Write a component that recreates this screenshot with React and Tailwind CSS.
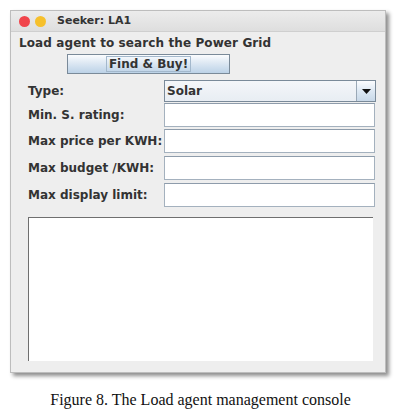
import React from "react";

const fields = [
    { label: "Min. S. rating:", mt: "mt-[1px]" },
    { label: "Max price per KWH:", mt: "mt-[2px]" },
    { label: "Max budget /KWH:", mt: "mt-[3px]" },
    { label: "Max display limit:", mt: "mt-[3px]" },
];

const App = () => {
    return (
        <div className="w-[401px] h-[417px] bg-white overflow-hidden" style={{ fontFamily: "'DejaVu Sans', sans-serif" }}>
            <div className="ml-[10px] mt-[10px] w-[376px] h-[363px] border border-[#bdbdbd] bg-[#eeeeee] shadow-[3px_3px_4px_rgba(0,0,0,0.45)] flex flex-col">
                {/* title bar */}
                <div className="h-[21px] flex items-center border-b border-[#cfcfcf] bg-[linear-gradient(to_bottom,#ececec,#dedede)]">
                    <span className="ml-[8px] w-[11px] h-[11px] rounded-full bg-[#f0444b]"></span>
                    <span className="ml-[5px] w-[11px] h-[11px] rounded-full bg-[#f6c02c]"></span>
                    <span className="ml-[11px] text-[11px] font-bold text-[#333333]">Seeker: LA1</span>
                </div>

                <div className="mt-[4px] ml-[8px] text-[12px] leading-[15px] font-bold text-[#333333] tracking-[0.1px]">
                    Load agent to search the Power Grid
                </div>

                <button className="mt-[3px] ml-[56px] w-[163px] h-[20px] border border-[#7a8a99] bg-[linear-gradient(to_bottom,#fbfcfe,#dde8f3_45%,#bcd2e7)] flex items-center justify-center">
                    <span className="px-[2px] border border-[#a3b8cc] text-[12px] leading-[14px] font-bold text-[#333333]">Find &amp; Buy!</span>
                </button>

                <div className="mt-[6px] flex items-center h-[22px]">
                    <div className="w-[153px] pl-[17px] text-[12px] font-bold text-[#333333]">Type:</div>
                    <div className="w-[212px] h-[22px] border border-[#7a8a99] flex bg-[linear-gradient(to_bottom,#f4f6f9,#e8edf3)]">
                        <div className="flex-1 flex items-center pl-[2px] text-[12px] font-bold text-[#333333]">Solar</div>
                        <div className="w-[19px] border-l border-[#9aa8b6] flex items-center justify-center bg-[linear-gradient(to_bottom,#fbfcfe,#dde8f3_50%,#c8d8e8)]">
                            <svg width="9" height="5" viewBox="0 0 9 5">
                                <polygon points="0,0 9,0 4.5,5" fill="#111111" />
                            </svg>
                        </div>
                    </div>
                </div>

                {fields.map((f) => (
                    <div key={f.label} className={`${f.mt} flex items-center h-[24px]`}>
                        <div className="w-[153px] pl-[17px] text-[12px] font-bold text-[#333333] whitespace-nowrap">{f.label}</div>
                        <div className="w-[211px] h-[24px] bg-white border border-[#a4b1be] border-t-[#8e9cab]"></div>
                    </div>
                ))}

                <div className="mt-[10px] ml-[17px] w-[345px] h-[144px] bg-white border-t border-l border-[#6f6f6f]"></div>
            </div>

            <div className="mt-[17px] text-center text-[16px] leading-[19px] text-[#111111]" style={{ fontFamily: "'Liberation Serif', serif" }}>
                Figure 8. The Load agent management console
            </div>
        </div>
    );
};

export default App;
